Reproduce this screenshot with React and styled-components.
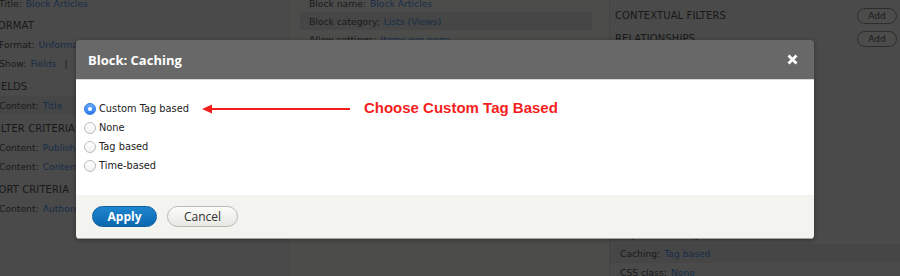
import React from "react";
import styled, { createGlobalStyle } from "styled-components";

const GlobalStyle = createGlobalStyle`
  body {
    margin: 0;
    background: #4b4b4b;
    overflow: hidden;
  }
`;

const Page = styled.div`
  position: relative;
  width: 900px;
  height: 276px;
  overflow: hidden;
  background: #bdbdbc;
  font-family: "DejaVu Sans", sans-serif;
`;

const Columns = styled.div`
  display: flex;
  margin-top: -6px;
`;

const LeftCol = styled.div`
  flex: 0 0 300px;
  margin-left: -10px;
  background: #b9b9b8;
`;

const MidCol = styled.div`
  flex: 0 0 292px;
  margin-left: 10px;
`;

const RightCol = styled.div`
  flex: 1;
  margin-left: 17px;
  padding-top: 10px;
  border-left: 1px solid #a8a8a7;
  background: #b9b9b8;
`;

const Heading = styled.div`
  display: flex;
  align-items: center;
  justify-content: space-between;
  height: ${(p) => p.h || 20}px;
  padding: 0 3px 0 ${(p) => p.indent || 2}px;
  margin-top: ${(p) => p.gap || 0}px;
  font-size: 10px;
  letter-spacing: 0.1px;
  color: #404040;
`;

const Row = styled.div`
  display: flex;
  align-items: center;
  height: ${(p) => p.h || 19}px;
  padding-left: ${(p) => p.indent || 9}px;
  font-size: 9.2px;
  white-space: nowrap;
  color: #454545;
  background: ${(p) => (p.band ? "#afafae" : "transparent")};
`;

const Link = styled.span`
  color: #3d72b0;
  margin-left: 4px;
`;

const Pipe = styled.span`
  margin: 0 8px;
  color: #454545;
`;

const AddButton = styled.span`
  display: inline-flex;
  align-items: center;
  justify-content: center;
  width: 38px;
  height: 14px;
  border: 1px solid #727272;
  border-radius: 8px;
  font-size: 9px;
  color: #454545;
  background: #bdbdbc;
`;

const Backdrop = styled.div`
  position: absolute;
  inset: 0;
  background: rgba(0, 0, 0, 0.6);
`;

const Dialog = styled.div`
  position: absolute;
  top: 40px;
  left: 76px;
  width: 738px;
  border-radius: 4px;
  overflow: hidden;
  box-shadow: 0 1px 4px rgba(0, 0, 0, 0.35);
`;

const DialogHeader = styled.div`
  display: flex;
  align-items: center;
  justify-content: space-between;
  height: 39px;
  padding: 0 16px 0 12px;
  background: #686868;
  border-bottom: 1px solid #d8d8d8;
`;

const Title = styled.h2`
  margin: 0;
  font-family: "Open Sans", sans-serif;
  font-weight: 700;
  font-size: 13px;
  color: #fff;
`;

const CloseButton = styled.button`
  display: flex;
  padding: 0;
  border: 0;
  background: none;
  cursor: pointer;
`;

const DialogBody = styled.div`
  padding: 19px 8px 20px;
  background: #fff;
`;

const Option = styled.label`
  display: flex;
  align-items: center;
  height: 19px;
  font-size: 9.8px;
  color: #222;
`;

const Radio = styled.span`
  display: inline-flex;
  align-items: center;
  justify-content: center;
  width: 12px;
  height: 12px;
  margin-right: 3px;
  box-sizing: border-box;
  border-radius: 50%;
  border: 1px solid ${(p) => (p.checked ? "#2f78e0" : "#bdbdbd")};
  background: ${(p) =>
    p.checked
      ? "linear-gradient(#6aa9fb, #2d7cf0)"
      : "linear-gradient(#ffffff, #f1f1f1)"};
  &::after {
    content: "";
    display: ${(p) => (p.checked ? "block" : "none")};
    width: 4px;
    height: 4px;
    border-radius: 50%;
    background: #fff;
  }
`;

const Annotation = styled.span`
  display: flex;
  align-items: center;
  margin-left: 13px;
`;

const AnnotationText = styled.span`
  margin: -3px 0 0 14px;
  font-family: "Liberation Sans", Arial, sans-serif;
  font-weight: 700;
  font-size: 15px;
  color: #f41e1e;
`;

const DialogFooter = styled.div`
  display: flex;
  align-items: center;
  gap: 10px;
  height: 43px;
  padding-left: 16px;
  background: #f3f3ef;
  border-bottom: 1px solid #a2a29e;
`;

const Button = styled.button`
  height: 21px;
  width: ${(p) => (p.primary ? 65 : 71)}px;
  padding: 0;
  border-radius: 11px;
  font-family: "Open Sans", sans-serif;
  font-size: 12px;
  font-weight: ${(p) => (p.primary ? 700 : 500)};
  color: ${(p) => (p.primary ? "#fff" : "#333")};
  border: 1px solid ${(p) => (p.primary ? "#0b5d9e" : "#b9b9b4")};
  background: ${(p) =>
    p.primary
      ? "linear-gradient(#1f85cf, #0a68ae)"
      : "linear-gradient(#fcfcfa, #e8e8e3)"};
  cursor: pointer;
`;

const otherRows = [
  ["Machine Name:", "block_1"],
  ["Administrative comment:", "None"],
  ["Use AJAX:", "No"],
  ["Hide attachments in summary:", "No"],
  ["Contextual links:", "Shown"],
  ["Use aggregation:", "No"],
  ["Query settings:", "Settings"],
  ["Group by:", "No"],
  ["Exposed form style:", "Basic"],
];

const options = ["Custom Tag based", "None", "Tag based", "Time-based"];

function Arrow() {
  return (
    <svg width="148" height="10" viewBox="0 0 148 10">
      <line x1="8" y1="5" x2="148" y2="5" stroke="#f41e1e" strokeWidth="2" />
      <polygon points="0,5 10,0.5 10,9.5" fill="#f41e1e" />
    </svg>
  );
}

function CloseIcon() {
  return (
    <svg width="11" height="11" viewBox="0 0 11 11">
      <path d="M1.5 1.5 L9.5 9.5 M9.5 1.5 L1.5 9.5" stroke="#fff" strokeWidth="2.8" />
    </svg>
  );
}

export default function App() {
  return (
    <>
      <GlobalStyle />
      <Page>
        <Columns>
          <LeftCol>
            <Row>
              Title:<Link>Block Articles</Link>
            </Row>
            <Heading gap={2}>FORMAT</Heading>
            <Row>
              Format:<Link>Unformatted list</Link>
              <Pipe>|</Pipe>
              <Link>Settings</Link>
            </Row>
            <Row>
              Show:<Link>Fields</Link>
              <Pipe>|</Pipe>
              <Link>Settings</Link>
            </Row>
            <Heading gap={3}>FIELDS</Heading>
            <Row band>
              Content:<Link>Title</Link>
            </Row>
            <Heading gap={3}>FILTER CRITERIA</Heading>
            <Row>
              Content:<Link>Published (= Yes)</Link>
            </Row>
            <Row>
              Content:<Link>Content type (= Article)</Link>
            </Row>
            <Heading gap={3}>SORT CRITERIA</Heading>
            <Row>
              Content:<Link>Authored on (desc)</Link>
            </Row>
          </LeftCol>

          <MidCol>
            <Row h={18}>
              Block name:<Link>Block Articles</Link>
            </Row>
            <Row h={18} band>
              Block category:<Link>Lists (Views)</Link>
            </Row>
            <Row h={18}>
              Allow settings:<Link>Items per page</Link>
            </Row>
          </MidCol>

          <RightCol>
            <Heading h={23} indent={5}>
              CONTEXTUAL FILTERS<AddButton>Add</AddButton>
            </Heading>
            <Heading h={23} indent={5}>
              RELATIONSHIPS<AddButton>Add</AddButton>
            </Heading>
            <Heading h={23} indent={5}>
              OTHER
            </Heading>
            {otherRows.map(([label, value]) => (
              <Row key={label} indent={10}>
                {label}
                <Link>{value}</Link>
              </Row>
            ))}
            <Row indent={10} band>
              Caching:<Link>Tag based</Link>
            </Row>
            <Row indent={10}>
              CSS class:<Link>None</Link>
            </Row>
          </RightCol>
        </Columns>

        <Backdrop />

        <Dialog>
          <DialogHeader>
            <Title>Block: Caching</Title>
            <CloseButton aria-label="Close">
              <CloseIcon />
            </CloseButton>
          </DialogHeader>
          <DialogBody>
            {options.map((opt, i) => (
              <Option key={opt}>
                <Radio checked={i === 0} />
                {opt}
                {i === 0 && (
                  <Annotation>
                    <Arrow />
                    <AnnotationText>Choose Custom Tag Based</AnnotationText>
                  </Annotation>
                )}
              </Option>
            ))}
          </DialogBody>
          <DialogFooter>
            <Button primary>Apply</Button>
            <Button>Cancel</Button>
          </DialogFooter>
        </Dialog>
      </Page>
    </>
  );
}
